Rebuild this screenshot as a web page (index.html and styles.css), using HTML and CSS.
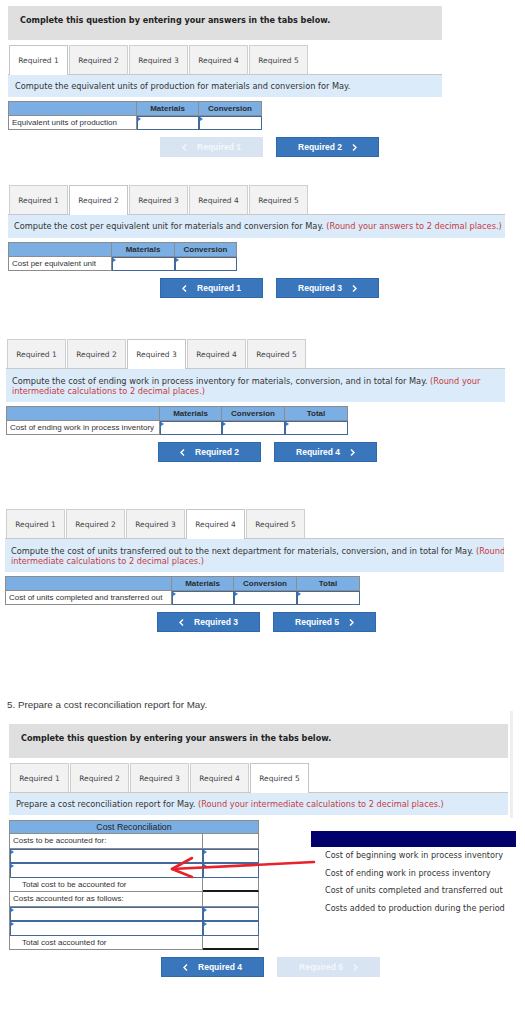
FILE: index.html
```html
<!DOCTYPE html>
<html>
<head>
<meta charset="utf-8">
<link rel="stylesheet" href="styles.css">
</head>
<body>

<section class="part s1">
  <div class="qhead">Complete this question by entering your answers in the tabs below.</div>
  <div class="tabs">
    <div class="tab active">Required 1</div>
    <div class="tab">Required 2</div>
    <div class="tab">Required 3</div>
    <div class="tab">Required 4</div>
    <div class="tab">Required 5</div>
  </div>
  <div class="bar one">Compute the equivalent units of production for materials and conversion for May.</div>
  <div class="grid g1">
    <div class="th"></div><div class="th">Materials</div><div class="th">Conversion</div>
    <div class="lbl">Equivalent units of production</div><div class="in"></div><div class="in"></div>
  </div>
  <div class="nav">
    <div class="btn off"><svg viewBox="0 0 5 7"><polyline points="4,0.5 1,3.5 4,6.5"/></svg>Required 1</div>
    <div class="btn">Required 2<svg viewBox="0 0 5 7"><polyline points="1,0.5 4,3.5 1,6.5"/></svg></div>
  </div>
</section>

<section class="part s2">
  <div class="tabs">
    <div class="tab">Required 1</div>
    <div class="tab active">Required 2</div>
    <div class="tab">Required 3</div>
    <div class="tab">Required 4</div>
    <div class="tab">Required 5</div>
  </div>
  <div class="bar one tall">Compute the cost per equivalent unit for materials and conversion for May. <span class="red">(Round your answers to 2 decimal places.)</span></div>
  <div class="grid g2">
    <div class="th"></div><div class="th">Materials</div><div class="th">Conversion</div>
    <div class="lbl">Cost per equivalent unit</div><div class="in"></div><div class="in"></div>
  </div>
  <div class="nav">
    <div class="btn"><svg viewBox="0 0 5 7"><polyline points="4,0.5 1,3.5 4,6.5"/></svg>Required 1</div>
    <div class="btn">Required 3<svg viewBox="0 0 5 7"><polyline points="1,0.5 4,3.5 1,6.5"/></svg></div>
  </div>
</section>

<section class="part s3">
  <div class="tabs">
    <div class="tab">Required 1</div>
    <div class="tab">Required 2</div>
    <div class="tab active">Required 3</div>
    <div class="tab">Required 4</div>
    <div class="tab">Required 5</div>
  </div>
  <div class="bar two">Compute the cost of ending work in process inventory for materials, conversion, and in total for May. <span class="red">(Round your<br>intermediate calculations to 2 decimal places.)</span></div>
  <div class="grid g3">
    <div class="th"></div><div class="th">Materials</div><div class="th">Conversion</div><div class="th">Total</div>
    <div class="lbl">Cost of ending work in process inventory</div><div class="in"></div><div class="in"></div><div class="in"></div>
  </div>
  <div class="nav">
    <div class="btn"><svg viewBox="0 0 5 7"><polyline points="4,0.5 1,3.5 4,6.5"/></svg>Required 2</div>
    <div class="btn">Required 4<svg viewBox="0 0 5 7"><polyline points="1,0.5 4,3.5 1,6.5"/></svg></div>
  </div>
</section>

<section class="part s4">
  <div class="tabs">
    <div class="tab">Required 1</div>
    <div class="tab">Required 2</div>
    <div class="tab">Required 3</div>
    <div class="tab active">Required 4</div>
    <div class="tab">Required 5</div>
  </div>
  <div class="bar two">Compute the cost of units transferred out to the next department for materials, conversion, and in total for May. <span class="red">(Round your<br>intermediate calculations to 2 decimal places.)</span></div>
  <div class="grid g4">
    <div class="th"></div><div class="th">Materials</div><div class="th">Conversion</div><div class="th">Total</div>
    <div class="lbl">Cost of units completed and transferred out</div><div class="in"></div><div class="in"></div><div class="in"></div>
  </div>
  <div class="nav">
    <div class="btn"><svg viewBox="0 0 5 7"><polyline points="4,0.5 1,3.5 4,6.5"/></svg>Required 3</div>
    <div class="btn">Required 5<svg viewBox="0 0 5 7"><polyline points="1,0.5 4,3.5 1,6.5"/></svg></div>
  </div>
</section>

<p class="prompt">5. Prepare a cost reconciliation report for May.</p>

<section class="part s5">
  <div class="qhead">Complete this question by entering your answers in the tabs below.</div>
  <div class="tabs">
    <div class="tab">Required 1</div>
    <div class="tab">Required 2</div>
    <div class="tab">Required 3</div>
    <div class="tab">Required 4</div>
    <div class="tab active">Required 5</div>
  </div>
  <div class="bar one">Prepare a cost reconciliation report for May. <span class="red">(Round your intermediate calculations to 2 decimal places.)</span></div>
</section>

<section class="part s5b">
  <div class="grid g5">
    <div class="th span2 plain">Cost Reconciliation</div>
    <div class="lbl">Costs to be accounted for:</div><div class="lbl"></div>
    <div class="in"></div><div class="in"></div>
    <div class="in"></div><div class="in"></div>
    <div class="lbl ind">Total cost to be accounted for</div><div class="lbl tot"></div>
    <div class="lbl">Costs accounted for as follows:</div><div class="lbl"></div>
    <div class="in"></div><div class="in"></div>
    <div class="in"></div><div class="in"></div>
    <div class="lbl ind">Total cost accounted for</div><div class="lbl tot"></div>
  </div>

  <div class="dd">
    <div class="dd-head"></div>
    <div class="dd-item">Cost of beginning work in process inventory</div>
    <div class="dd-item">Cost of ending work in process inventory</div>
    <div class="dd-item">Cost of units completed and transferred out</div>
    <div class="dd-item">Costs added to production during the period</div>
  </div>

  <svg class="arrow" viewBox="0 0 320 70">
    <path d="M305,42 L163,49"/>
    <path d="M183,38 L163,49 L183,57"/>
  </svg>

  <div class="nav">
    <div class="btn"><svg viewBox="0 0 5 7"><polyline points="4,0.5 1,3.5 4,6.5"/></svg>Required 4</div>
    <div class="btn off">Required 5<svg viewBox="0 0 5 7"><polyline points="1,0.5 4,3.5 1,6.5"/></svg></div>
  </div>
</section>

</body>
</html>
```

FILE: styles.css
```css
* { box-sizing: border-box; }

body {
  margin: 0;
  padding-top: 6px;
  width: 525px;
  overflow: hidden;
  background: #fff;
  font-family: "DejaVu Sans", Verdana, sans-serif;
  color: #333;
}

.part { position: relative; }

.s1 { margin-left: 8px; width: 434px; }
.s2 { margin: 28px 0 0 8px; width: 497px; }
.s3 { margin: 41px 0 0 6px; width: 499px; }
.s4 { margin: 47px 0 0 5px; width: 499px; }

.prompt {
  margin: 67px 0 0 7px;
  font: 9.8px/12px "Liberation Sans", Arial, sans-serif;
  color: #3a3a3a;
}

.s5 {
  margin-left: 9px;
  width: 504px;
  padding: 13px 2px 3px 0;
  border-right: 3px solid #efefef;
}

.s5b { margin: 2px 0 0 9px; width: 499px; }

.qhead {
  height: 34px;
  background: #dfdfdf;
  padding: 9px 12px 0;
  font-size: 8.1px;
  line-height: 10px;
  font-weight: bold;
  color: #222;
}

.tabs {
  margin-top: 5px;
  display: flex;
  align-items: flex-start;
  gap: 1px;
  padding-left: 1px;
  height: 30px;
  border-bottom: 1px solid #c8c8c8;
}

.tab {
  width: 59px;
  height: 29px;
  border: 1px solid #cfcfcf;
  border-bottom: 0;
  background: #f2f2f2;
  font-size: 7.5px;
  color: #444;
  display: flex;
  align-items: center;
  justify-content: center;
}

.tab.active {
  background: #fff;
  height: 30px;
  border-color: #c4c4c4;
}

.bar {
  background: #dbebf9;
  font-size: 8.22px;
  line-height: 10px;
  padding: 6px 6px 0;
  white-space: nowrap;
  overflow: hidden;
  color: #333;
}
.bar.one { height: 22px; }
.bar.one.tall { height: 23px; }
.bar.two { height: 33px; padding-top: 7px; }

.s5 .bar { padding-left: 7px; }
.s1 .bar { padding-left: 7px; }

.red { color: #c73a43; }

.grid {
  display: grid;
  margin-top: 4px;
  width: max-content;
  border-top: 1px solid #8c8c8c;
  border-left: 1px solid #8c8c8c;
  font-family: "Liberation Sans", Arial, sans-serif;
  font-size: 8px;
  grid-template-rows: 14px 14px;
}

.g1 { grid-template-columns: 128px 62px 63px; }
.g2 { grid-template-columns: 103px 63px 62px; }
.g3 { grid-template-columns: 153px 62px 63px 63px; }
.g4 { grid-template-columns: 166px 62px 63px 63px; }
.g5 {
  margin-top: 0;
  grid-template-columns: 193px 56px;
  grid-template-rows: 13px repeat(8, 14.5px);
}

.grid > div {
  border-right: 1px solid #8c8c8c;
  border-bottom: 1px solid #8c8c8c;
  display: flex;
  align-items: center;
  white-space: nowrap;
}

.th {
  background: #7bafe4;
  justify-content: center;
  font-weight: bold;
  color: #2b2b2b;
}

.th.plain { font-weight: normal; font-size: 8.8px; color: #222; }
.span2 { grid-column: span 2; }

.lbl {
  padding-left: 3px;
  background: #fff;
  color: #333;
}

.lbl.ind { padding-left: 12px; }

.grid > .tot { border-bottom: 2px solid #1a1a1a; }

.grid > .in {
  position: relative;
  background: #fff;
  border-color: #43699b;
  box-shadow: inset 1px 1px 0 #43699b;
}

.in::before {
  content: "";
  position: absolute;
  left: 1px;
  top: 1px;
  border-left: 3px solid #2d7be0;
  border-top: 2px solid transparent;
  border-bottom: 2px solid transparent;
}

.nav {
  display: flex;
  gap: 13px;
  margin: 7px 0 0 152px;
}

.btn {
  width: 103px;
  height: 20px;
  background: #3a76bb;
  border: 1px solid #3168a9;
  color: #fff;
  font-family: "Liberation Sans", Arial, sans-serif;
  font-size: 8.5px;
  font-weight: bold;
  display: flex;
  align-items: center;
  justify-content: center;
  gap: 10px;
}

.btn.off {
  background: #d8e4f1;
  border-color: #d8e4f1;
  color: #f4f7fb;
}

.btn svg {
  width: 5px;
  height: 7px;
  fill: none;
  stroke: currentColor;
  stroke-width: 1.4;
}

.dd {
  position: absolute;
  left: 302px;
  top: 11px;
  width: 205px;
  background: #fff;
  z-index: 1;
}

.dd-head {
  height: 16px;
  background: #02006a;
}

.dd-item {
  padding-left: 14px;
  font-size: 8.1px;
  line-height: 17.7px;
  color: #333;
  white-space: nowrap;
}

.arrow {
  position: absolute;
  left: 0;
  top: 0;
  width: 320px;
  height: 70px;
  z-index: 2;
  fill: none;
  stroke: #e8222b;
  stroke-width: 2.6;
  stroke-linecap: round;
  stroke-linejoin: round;
  pointer-events: none;
}
```
